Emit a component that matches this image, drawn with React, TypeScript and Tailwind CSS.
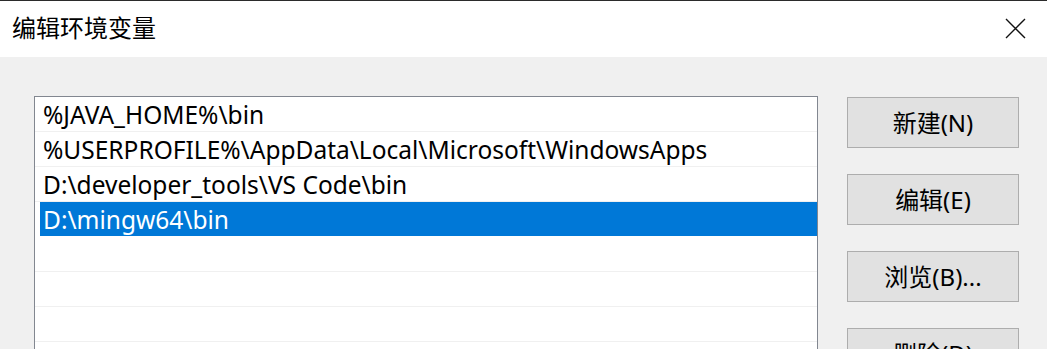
const FONT = { fontFamily: '"Noto Sans", "Noto Sans CJK SC", sans-serif' };

const paths = [
  "%JAVA_HOME%\\bin",
  "%USERPROFILE%\\AppData\\Local\\Microsoft\\WindowsApps",
  "D:\\developer_tools\\VS Code\\bin",
  "D:\\mingw64\\bin",
  "",
  "",
  "",
];

const buttons = ["新建(N)", "编辑(E)", "浏览(B)...", "删除(D)"];

export default function App() {
  return (
    <div className="w-[1047px] h-[349px] overflow-hidden bg-[#f0f0f0] text-black" style={FONT}>
      {/* title bar */}
      <div className="h-[57px] bg-white border-t border-[#2b2b2b] flex items-center justify-between pl-[12px] pr-[21px]">
        <span className="text-[24px] leading-none -mt-[2px]">编辑环境变量</span>
        <svg width="21" height="21" viewBox="0 0 21 21" className="-mt-[1px]">
          <path d="M1 1L20 20M20 1L1 20" stroke="#111" strokeWidth="1.4" fill="none" />
        </svg>
      </div>

      <div className="flex pt-[39px] pl-[34px] pr-[28px]">
        {/* path list */}
        <div className="w-[784px] h-[300px] bg-white border border-[#828790] border-b-0">
          {paths.map((p, i) =>
            i === 3 ? (
              <div key={i} className="h-[35px] pl-[5px]">
                <div className="h-[34px] bg-[#0078d7] text-white flex items-center pl-[3px] pt-[3px] text-[24.5px] leading-none">
                  {p}
                </div>
              </div>
            ) : (
              <div
                key={i}
                className="h-[35px] border-b border-[#f0f0f0] flex items-center pl-[8px] pt-[3px] text-[24.5px] leading-none"
              >
                {p}
              </div>
            )
          )}
        </div>

        {/* buttons */}
        <div className="ml-auto flex flex-col gap-[26px] pt-[1px]">
          {buttons.map((b) => (
            <button
              key={b}
              className="w-[172px] h-[51px] shrink-0 bg-[#e1e1e1] border border-[#adadad] text-[24px] leading-none flex items-center justify-center"
            >
              {b}
            </button>
          ))}
        </div>
      </div>
    </div>
  );
}
